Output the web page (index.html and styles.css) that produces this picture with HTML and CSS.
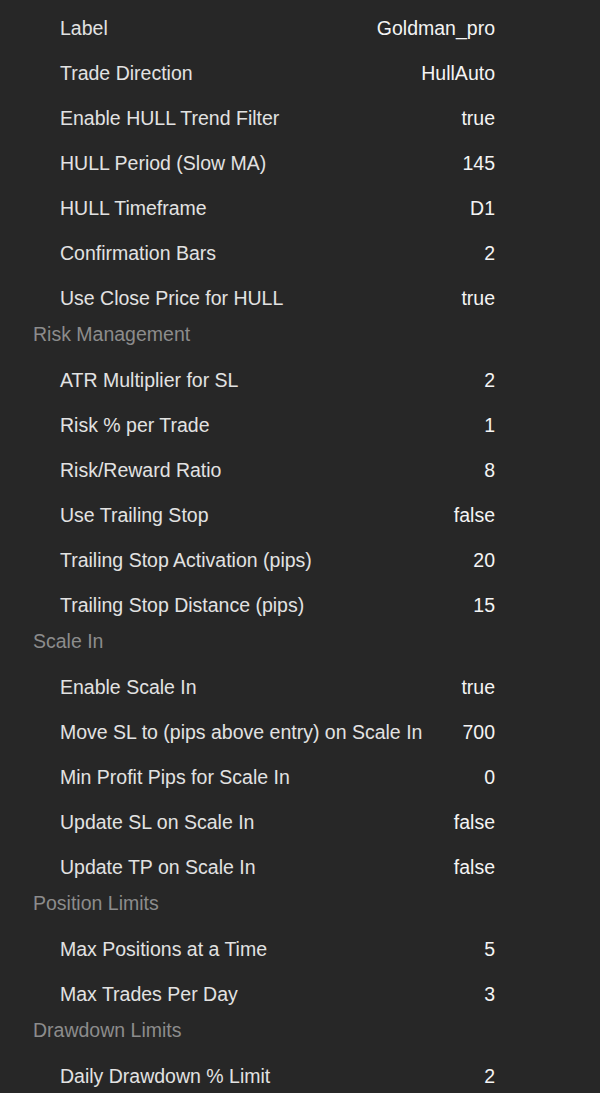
FILE: index.html
```html
<!DOCTYPE html>
<html>
<head>
<meta charset="utf-8">
<link rel="stylesheet" href="styles.css">
</head>
<body>
<div class="panel">
  <div class="row"><span class="name">Label</span><span class="val">Goldman_pro</span></div>
  <div class="row"><span class="name">Trade Direction</span><span class="val">HullAuto</span></div>
  <div class="row"><span class="name">Enable HULL Trend Filter</span><span class="val">true</span></div>
  <div class="row"><span class="name">HULL Period (Slow MA)</span><span class="val">145</span></div>
  <div class="row"><span class="name">HULL Timeframe</span><span class="val">D1</span></div>
  <div class="row"><span class="name">Confirmation Bars</span><span class="val">2</span></div>
  <div class="row"><span class="name">Use Close Price for HULL</span><span class="val">true</span></div>
  <div class="section">Risk Management</div>
  <div class="row"><span class="name">ATR Multiplier for SL</span><span class="val">2</span></div>
  <div class="row"><span class="name">Risk % per Trade</span><span class="val">1</span></div>
  <div class="row"><span class="name">Risk/Reward Ratio</span><span class="val">8</span></div>
  <div class="row"><span class="name">Use Trailing Stop</span><span class="val">false</span></div>
  <div class="row"><span class="name">Trailing Stop Activation (pips)</span><span class="val">20</span></div>
  <div class="row"><span class="name">Trailing Stop Distance (pips)</span><span class="val">15</span></div>
  <div class="section">Scale In</div>
  <div class="row"><span class="name">Enable Scale In</span><span class="val">true</span></div>
  <div class="row"><span class="name">Move SL to (pips above entry) on Scale In</span><span class="val">700</span></div>
  <div class="row"><span class="name">Min Profit Pips for Scale In</span><span class="val">0</span></div>
  <div class="row"><span class="name">Update SL on Scale In</span><span class="val">false</span></div>
  <div class="row"><span class="name">Update TP on Scale In</span><span class="val">false</span></div>
  <div class="section">Position Limits</div>
  <div class="row"><span class="name">Max Positions at a Time</span><span class="val">5</span></div>
  <div class="row"><span class="name">Max Trades Per Day</span><span class="val">3</span></div>
  <div class="section">Drawdown Limits</div>
  <div class="row"><span class="name">Daily Drawdown % Limit</span><span class="val">2</span></div>
</div>
</body>
</html>
```
FILE: styles.css
```css
html, body {
  margin: 0;
  padding: 0;
  background: #272727;
  height: 100%;
  overflow: hidden;
}
.panel {
  font-family: "Liberation Sans", sans-serif;
  font-size: 19.5px;
  padding: 6px 105px 0 0;
}
.row {
  display: flex;
  justify-content: space-between;
  align-items: center;
  height: 45px;
  padding-left: 60px;
}
.name {
  color: #e2e2e2;
}
.val {
  color: #f4f4f4;
}
.section {
  height: 37px;
  padding-left: 33px;
  color: #8c8c8c;
  line-height: 22px;
  padding-top: 2px;
  box-sizing: border-box;
}
```
